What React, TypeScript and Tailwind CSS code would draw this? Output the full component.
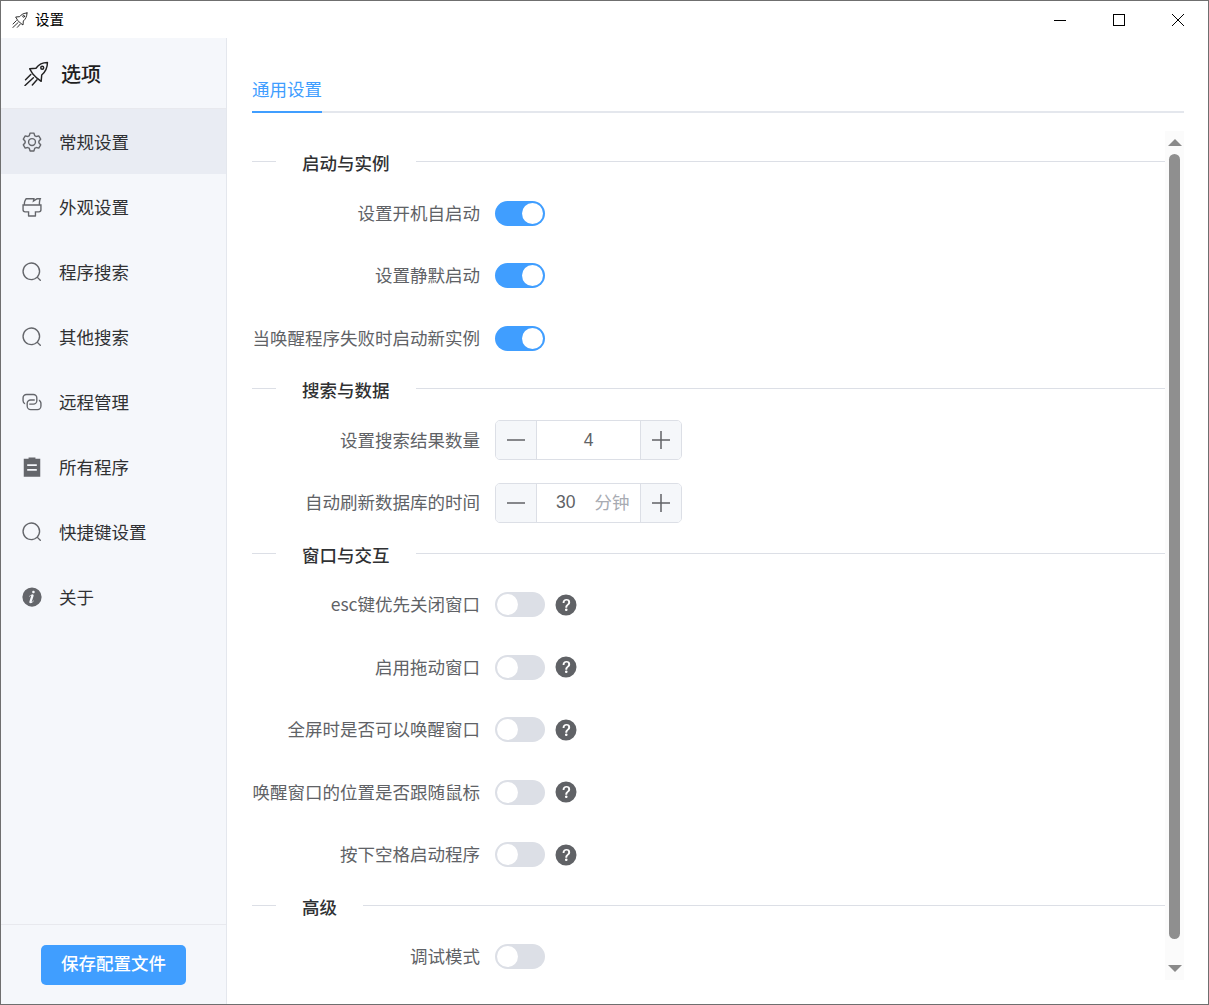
import React from "react";

const P = {
  setting:
    "M600.704 64a32 32 0 0 1 30.464 22.208l35.2 109.376c14.784 7.232 28.928 15.36 42.432 24.512l112.384-24.192a32 32 0 0 1 34.432 15.36L944.32 364.8a32 32 0 0 1-4.032 37.504l-77.12 85.12a357.12 357.12 0 0 1 0 49.024l77.12 85.248a32 32 0 0 1 4.032 37.504l-88.704 153.6a32 32 0 0 1-34.432 15.296L708.8 803.904c-13.44 9.088-27.648 17.28-42.368 24.512l-35.264 109.376A32 32 0 0 1 600.704 960H423.296a32 32 0 0 1-30.464-22.208L357.696 828.48a351.616 351.616 0 0 1-42.56-24.64l-112.32 24.256a32 32 0 0 1-34.432-15.36L79.68 659.2a32 32 0 0 1 4.032-37.504l77.12-85.248a357.12 357.12 0 0 1 0-48.896l-77.12-85.248A32 32 0 0 1 79.68 364.8l88.704-153.6a32 32 0 0 1 34.432-15.296l112.32 24.256c13.568-9.152 27.776-17.408 42.56-24.64l35.2-109.312A32 32 0 0 1 423.232 64H600.64zm-23.424 64H446.72l-36.352 113.088-24.512 11.968a294.113 294.113 0 0 0-34.816 20.096l-22.656 15.36-116.224-25.088-65.28 113.152 79.68 88.192-1.92 27.136a293.12 293.12 0 0 0 0 40.192l1.92 27.136-79.808 88.192 65.344 113.152 116.224-25.024 22.656 15.296a294.113 294.113 0 0 0 34.816 20.096l24.512 11.968L446.72 896h130.688l36.48-113.152 24.448-11.904a288.282 288.282 0 0 0 34.752-20.096l22.592-15.296 116.288 25.024 65.28-113.152-79.744-88.192 1.92-27.136a293.12 293.12 0 0 0 0-40.256l-1.92-27.136 79.808-88.128-65.344-113.152-116.288 24.96-22.592-15.232a287.616 287.616 0 0 0-34.752-20.096l-24.448-11.904L577.344 128zM512 320a192 192 0 1 1 0 384 192 192 0 0 1 0-384m0 64a128 128 0 1 0 0 256 128 128 0 0 0 0-256",
  brush:
    "M896 448H128v192a64 64 0 0 0 64 64h192v192h256V704h192a64 64 0 0 0 64-64zm-770.752-64c0-47.552 5.248-90.24 15.552-128 14.72-54.016 42.496-107.392 83.2-160h417.28l-15.36 70.336L736 96h211.2c-24.832 42.88-41.92 96.256-51.2 160a664 664 0 0 0-6.144 128H960v256a128 128 0 0 1-128 128H704v160a32 32 0 0 1-32 32H352a32 32 0 0 1-32-32V768H192A128 128 0 0 1 64 640V384h61.248zm64 0h636.544c-2.048-45.824.256-91.584 6.848-137.216 4.48-30.848 10.688-59.776 18.688-86.784h-96.64l-221.12 141.248L561.92 160H256.512c-25.856 37.888-43.776 75.456-53.952 112.832-8.768 32.064-13.248 69.12-13.312 111.168z",
  search:
    "m795.904 750.72 124.992 124.928a32 32 0 0 1-45.248 45.248L750.72 795.904a416 416 0 1 1 45.248-45.248zM480 832a352 352 0 1 0 0-704 352 352 0 0 0 0 704",
  connection:
    "M640 384v64H448a128 128 0 0 0-128 128v128a128 128 0 0 0 128 128h320a128 128 0 0 0 128-128V576a128 128 0 0 0-64-110.848V394.88c74.56 26.368 128 97.472 128 181.056v128a192 192 0 0 1-192 192H448a192 192 0 0 1-192-192V576a192 192 0 0 1 192-192z M384 640v-64h192a128 128 0 0 0 128-128V320a128 128 0 0 0-128-128H256a128 128 0 0 0-128 128v128a128 128 0 0 0 64 110.848v70.272A192.064 192.064 0 0 1 64 448V320a192 192 0 0 1 192-192h320a192 192 0 0 1 192 192v128a192 192 0 0 1-192 192z",
  memo:
    "M128 128h224V64h320v64h224v832H128zM288 384v80h448v-80zm0 224v80h448v-80z",
  info:
    "M512 64a448 448 0 1 1 0 896.064A448 448 0 0 1 512 64m67.2 275.072c33.28 0 60.288-23.104 60.288-57.344s-27.072-57.344-60.288-57.344c-33.28 0-60.16 23.104-60.16 57.344s26.88 57.344 60.16 57.344M590.912 699.2c0-6.848 2.368-24.64 1.024-34.752l-52.608 60.544c-10.88 11.456-24.512 19.392-30.912 17.28a12.992 12.992 0 0 1-8.256-14.72l87.68-276.992c7.168-35.136-12.544-67.2-54.336-71.296-44.096 0-108.992 44.736-148.48 101.504 0 6.784-1.28 23.68.064 33.792l52.544-60.608c10.88-11.328 23.552-19.328 29.952-17.152a12.8 12.8 0 0 1 7.808 16.128L388.48 728.576c-10.048 32.256 8.96 63.872 55.04 71.04 67.84 0 107.904-43.648 147.456-100.416z",
  question:
    "M512 64a448 448 0 1 1 0 896 448 448 0 0 1 0-896zm23.744 191.488c-52.096 0-92.928 14.784-123.2 44.352-30.976 29.568-45.76 70.4-45.76 122.496h80.256c0-29.568 5.632-52.8 17.6-68.992 13.376-19.712 35.2-28.864 66.176-28.864 23.936 0 42.944 6.336 56.32 19.712 12.672 13.376 19.712 31.68 19.712 54.912 0 17.6-6.336 34.496-19.008 49.984l-8.448 9.856c-45.76 40.832-73.216 70.4-82.368 89.408-9.856 19.008-14.08 42.24-14.08 68.992v9.856h80.96v-9.856c0-16.896 3.52-31.68 10.56-45.76 6.336-12.672 15.488-24.64 28.16-35.2 33.792-29.568 54.208-48.576 60.544-55.616 16.896-22.528 26.048-51.392 26.048-86.592 0-42.944-14.08-76.736-42.24-101.376-28.16-25.344-65.472-37.312-111.232-37.312zm-12.672 406.208a54.272 54.272 0 0 0-38.72 14.784 49.408 49.408 0 0 0-15.488 38.016c0 15.488 4.928 28.16 15.488 38.016A54.848 54.848 0 0 0 523.072 768c15.488 0 28.16-4.928 38.72-14.784a51.52 51.52 0 0 0 16.192-38.72 51.968 51.968 0 0 0-15.488-38.016 55.936 55.936 0 0 0-39.424-14.784z",
};

const FONT = "font-['Noto_Sans_CJK_SC','Noto_Sans',sans-serif]";

function Icon({ d }: { d: string }) {
  return (
    <svg viewBox="0 0 1024 1024" className="h-[22px] w-[22px] shrink-0" fill="#64666b">
      <path d={d} />
    </svg>
  );
}

function Rocket({ size }: { size: number }) {
  return (
    <svg viewBox="0 0 24 24" width={size} height={size} fill="none" stroke="#222" strokeWidth="1.4" strokeLinejoin="round" strokeLinecap="round">
      <path d="M22.5 1.5C18 1.5 14 3.5 11.5 7L5.5 7.5 8.5 12.5 12.5 16.5 16.5 19.5 17 13.5C20.5 10.5 22.5 6.5 22.5 1.5Z" />
      <circle cx="17.5" cy="6.5" r="1.4" />
      <path d="M6.5 13 1.5 18M9 16 1 23.5M12.5 18 8 23" />
    </svg>
  );
}

function NavItem({ icon, label, active }: { icon: string; label: string; active?: boolean }) {
  return (
    <div className={`flex h-[65px] items-center gap-4 pl-5 pt-px ${active ? "bg-[#e9ecf3]" : ""}`}>
      <Icon d={icon} />
      <span className="text-[17.5px] text-[#303133]">{label}</span>
    </div>
  );
}

function Divider({ title, first }: { title: string; first?: boolean }) {
  return (
    <div className={`flex h-px items-center ${first ? "mt-0" : "mt-[30px]"} mb-[31px]`}>
      <div className="h-px w-6 bg-[#dcdfe6]" />
      <span className="relative top-[2px] px-[26px] text-[17.5px] font-medium text-[#303133]">{title}</span>
      <div className="h-px flex-1 bg-[#dcdfe6]" />
    </div>
  );
}

function Row({ label, children }: { label: string; children: React.ReactNode }) {
  return (
    <div className="mb-[22.5px] flex h-10 items-center">
      <div className="w-[228px] whitespace-nowrap pr-0 text-right text-[17.5px] text-[#606266]">{label}</div>
      <div className="ml-[15px] flex items-center">{children}</div>
    </div>
  );
}

function Toggle({ on, help }: { on?: boolean; help?: boolean }) {
  return (
    <>
      <div className={`flex h-[25px] w-[50px] items-center rounded-full px-[2px] ${on ? "justify-end bg-[#409eff]" : "justify-start bg-[#dcdfe6]"}`}>
        <div className="h-[21px] w-[21px] rounded-full bg-white" />
      </div>
      {help && (
        <svg viewBox="0 0 1024 1024" className="ml-[9px] h-6 w-6" fill="#606266">
          <path d={P.question} />
        </svg>
      )}
    </>
  );
}

function Stepper({ value, unit }: { value: string; unit?: string }) {
  return (
    <div className="flex h-10 w-[187px] overflow-hidden rounded-[5px] border border-[#dcdfe6]">
      <div className="flex w-[41px] items-center justify-center border-r border-[#dcdfe6] bg-[#f5f7fa]">
        <svg width="20" height="20" viewBox="0 0 20 20"><path d="M1 10h18" stroke="#606266" strokeWidth="1.5" /></svg>
      </div>
      <div className="flex flex-1 items-center justify-center text-[#606266]">
        {unit ? (
          <div className="flex w-full items-center pl-[19px]">
            <span className="font-['Liberation_Sans',sans-serif] text-[17.5px]">{value}</span>
            <span className="ml-[19px] text-[17.5px] text-[#a8abb2]">{unit}</span>
          </div>
        ) : (
          <span className="font-['Liberation_Sans',sans-serif] text-[17.5px]">{value}</span>
        )}
      </div>
      <div className="flex w-[41px] items-center justify-center border-l border-[#dcdfe6] bg-[#f5f7fa]">
        <svg width="20" height="20" viewBox="0 0 20 20"><path d="M1 10h18M10 1v18" stroke="#606266" strokeWidth="1.5" /></svg>
      </div>
    </div>
  );
}

export default function App() {
  return (
    <div className={`flex h-[1005px] w-[1209px] flex-col overflow-hidden border border-[#6f6f6f] bg-white ${FONT}`}>
      <div className="flex h-[37px] shrink-0 items-center">
        <div className="ml-[11px]"><Rocket size={16} /></div>
        <span className="relative -top-px ml-[7px] text-[14.5px] text-black">设置</span>
        <div className="ml-auto flex pr-px">
          <div className="flex h-[37px] w-[59px] items-center justify-center">
            <svg width="12" height="12" viewBox="0 0 12 12"><path d="M0 6.5h12" stroke="#000" /></svg>
          </div>
          <div className="flex h-[37px] w-[59px] items-center justify-center">
            <svg width="12" height="12" viewBox="0 0 12 12"><rect x=".5" y=".5" width="11" height="11" fill="none" stroke="#000" /></svg>
          </div>
          <div className="flex h-[37px] w-[59px] items-center justify-center">
            <svg width="12" height="12" viewBox="0 0 12 12"><path d="M0 0l12 12M12 0L0 12" stroke="#000" /></svg>
          </div>
        </div>
      </div>
      <div className="flex min-h-0 flex-1">
        <aside className="flex w-[226px] shrink-0 flex-col border-r border-[#e4e7ed] bg-[#f5f7fb]">
          <div className="flex h-[71px] shrink-0 items-center border-b border-[#e8e9ee] pl-[23px] pt-px">
            <Rocket size={25} />
            <span className="ml-3 text-xl font-medium text-[#1f1f1f]">选项</span>
          </div>
          <nav className="flex-1">
            <NavItem icon={P.setting} label="常规设置" active />
            <NavItem icon={P.brush} label="外观设置" />
            <NavItem icon={P.search} label="程序搜索" />
            <NavItem icon={P.search} label="其他搜索" />
            <NavItem icon={P.connection} label="远程管理" />
            <NavItem icon={P.memo} label="所有程序" />
            <NavItem icon={P.search} label="快捷键设置" />
            <NavItem icon={P.info} label="关于" />
          </nav>
          <div className="flex h-[80px] shrink-0 justify-center border-t border-[#e8e9ee] pt-5">
            <button className="h-10 w-[145px] rounded-[5px] bg-[#409eff] pb-[3px] text-[17.5px] font-medium text-white">保存配置文件</button>
          </div>
        </aside>
        <main className="flex min-w-0 flex-1 flex-col pl-[25px] pr-6">
          <div className="mt-[34px] h-[41px] shrink-0 border-b-2 border-[#e4e7ed]">
            <div className="flex h-[41px] w-[70px] items-start justify-center border-b-2 border-[#409eff] pt-[4px] text-[17.5px] leading-[26px] text-[#409eff]">
              通用设置
            </div>
          </div>
          <div className="mt-[18px] flex h-[849px] shrink-0">
            <div className="min-w-0 flex-1 overflow-hidden pt-[30px]">
              <Divider title="启动与实例" first />
              <Row label="设置开机自启动"><Toggle on /></Row>
              <Row label="设置静默启动"><Toggle on /></Row>
              <Row label="当唤醒程序失败时启动新实例"><Toggle on /></Row>
              <Divider title="搜索与数据" />
              <Row label="设置搜索结果数量"><Stepper value="4" /></Row>
              <Row label="自动刷新数据库的时间"><Stepper value="30" unit="分钟" /></Row>
              <Divider title="窗口与交互" />
              <Row label="esc键优先关闭窗口"><Toggle help /></Row>
              <Row label="启用拖动窗口"><Toggle help /></Row>
              <Row label="全屏时是否可以唤醒窗口"><Toggle help /></Row>
              <Row label="唤醒窗口的位置是否跟随鼠标"><Toggle help /></Row>
              <Row label="按下空格启动程序"><Toggle help /></Row>
              <Divider title="高级" />
              <Row label="调试模式"><Toggle /></Row>
            </div>
            <div className="flex w-[19px] shrink-0 flex-col items-center bg-[#fbfbfb]">
              <div className="mt-2 h-0 w-0 border-x-[7px] border-b-[7px] border-x-transparent border-b-[#8a8a8a]" />
              <div className="mt-2 h-[785px] w-[11px] rounded-full bg-[#8f8f8f]" />
              <div className="mt-[26px] h-0 w-0 border-x-[7px] border-t-[7px] border-x-transparent border-t-[#8a8a8a]" />
            </div>
          </div>
        </main>
      </div>
    </div>
  );
}
